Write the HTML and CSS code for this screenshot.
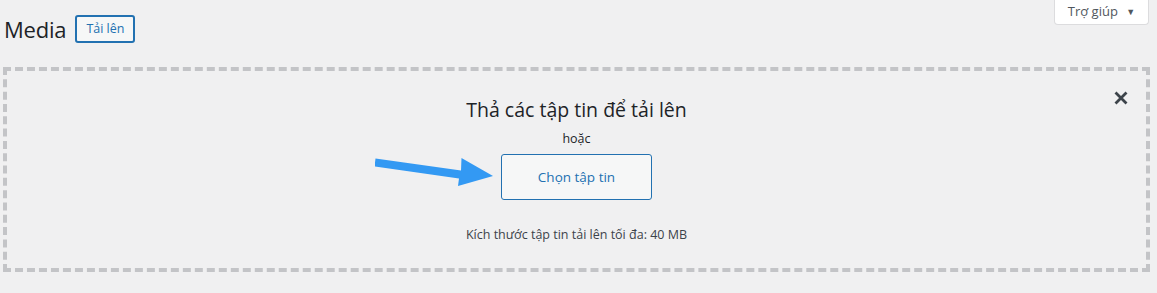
FILE: index.html
```html
<!DOCTYPE html>
<html lang="vi">
<head>
<meta charset="utf-8">
<title>Media</title>
<link rel="stylesheet" href="styles.css">
</head>
<body>
<div class="top">
  <div class="heading">
    <h1 class="title">Media</h1>
    <a class="title-action">Tải lên</a>
  </div>
  <button class="help-tab">Trợ giúp <span class="caret">▼</span></button>
</div>
<div class="uploader">
  <button class="close" aria-label="Đóng">
    <svg width="16" height="16" viewBox="0 0 16 16"><path d="M2.5 2.5 L13.5 13.5 M13.5 2.5 L2.5 13.5" stroke="#3c434a" stroke-width="2.8" stroke-linecap="butt" fill="none"/></svg>
  </button>
  <h2 class="drop-title">Thả các tập tin để tải lên</h2>
  <p class="or">hoặc</p>
  <div class="browse-row">
    <svg class="arrow" width="124" height="36" viewBox="0 0 124 36"><path d="M0.5 4.5 L86 16.5 L86.5 4 L118 22 L83 32 L84 24.5 L-0.5 12.5 Z" fill="#3399f3"/></svg>
    <button class="browse">Chọn tập tin</button>
  </div>
  <p class="max">Kích thước tập tin tải lên tối đa: 40 MB</p>
</div>
</body>
</html>
```
FILE: styles.css
```css
html, body {
  margin: 0;
  padding: 0;
  background: #f0f0f1;
  font-family: "Open Sans", "Noto Sans", sans-serif;
  color: #1d2327;
}
.top {
  display: flex;
  justify-content: space-between;
  align-items: flex-start;
  padding: 0 8px 0 4px;
  height: 67px;
}
.heading {
  display: flex;
  align-items: center;
  gap: 9px;
  padding-top: 15px;
}
.title {
  margin: 0;
  font-size: 22px;
  font-weight: 400;
  line-height: 28px;
  letter-spacing: -0.2px;
  color: #1d2327;
}
.title-action {
  display: inline-block;
  box-sizing: border-box;
  height: 28px;
  padding: 0 9px;
  border: 2px solid #2271b1;
  border-radius: 3px;
  background: #f6f7f7;
  color: #2271b1;
  font-size: 12.5px;
  font-weight: 500;
  line-height: 24px;
}
.help-tab {
  box-sizing: border-box;
  width: 95px;
  height: 25px;
  margin: 0;
  padding: 0 0 2px 0;
  border: 1px solid #dcdcde;
  border-top: none;
  border-radius: 0 0 4px 4px;
  background: #fff;
  color: #50575e;
  font-family: inherit;
  font-size: 13px;
  line-height: 22px;
}
.caret {
  font-size: 9px;
  margin-left: 5px;
  color: #50575e;
  vertical-align: 1px;
}
.uploader {
  position: relative;
  box-sizing: border-box;
  margin: 0 7px 0 3px;
  height: 205px;
  border: 4px dashed #c3c4c7;
  display: flex;
  flex-direction: column;
  align-items: center;
  padding-top: 25px;
}
.close {
  position: absolute;
  top: 19px;
  right: 17px;
  width: 16px;
  height: 16px;
  padding: 0;
  border: none;
  background: none;
}
.close svg { display: block; }
.drop-title {
  margin: 0;
  font-size: 19.5px;
  font-weight: 400;
  line-height: 28px;
  color: #1d2327;
}
.or {
  margin: 5px 0 0;
  font-size: 12.5px;
  line-height: 20px;
  color: #1d2327;
}
.browse-row {
  position: relative;
  margin-top: 5px;
}
.arrow {
  position: absolute;
  left: -126px;
  top: 0;
}
.browse {
  box-sizing: border-box;
  width: 151px;
  height: 46px;
  margin: 0;
  padding: 0;
  border: 1px solid #2271b1;
  border-radius: 3px;
  background: #f6f7f7;
  color: #2271b1;
  font-family: inherit;
  font-size: 13.5px;
}
.max {
  margin: 25px 0 0;
  font-size: 12.5px;
  line-height: 20px;
  color: #3c434a;
}
```
